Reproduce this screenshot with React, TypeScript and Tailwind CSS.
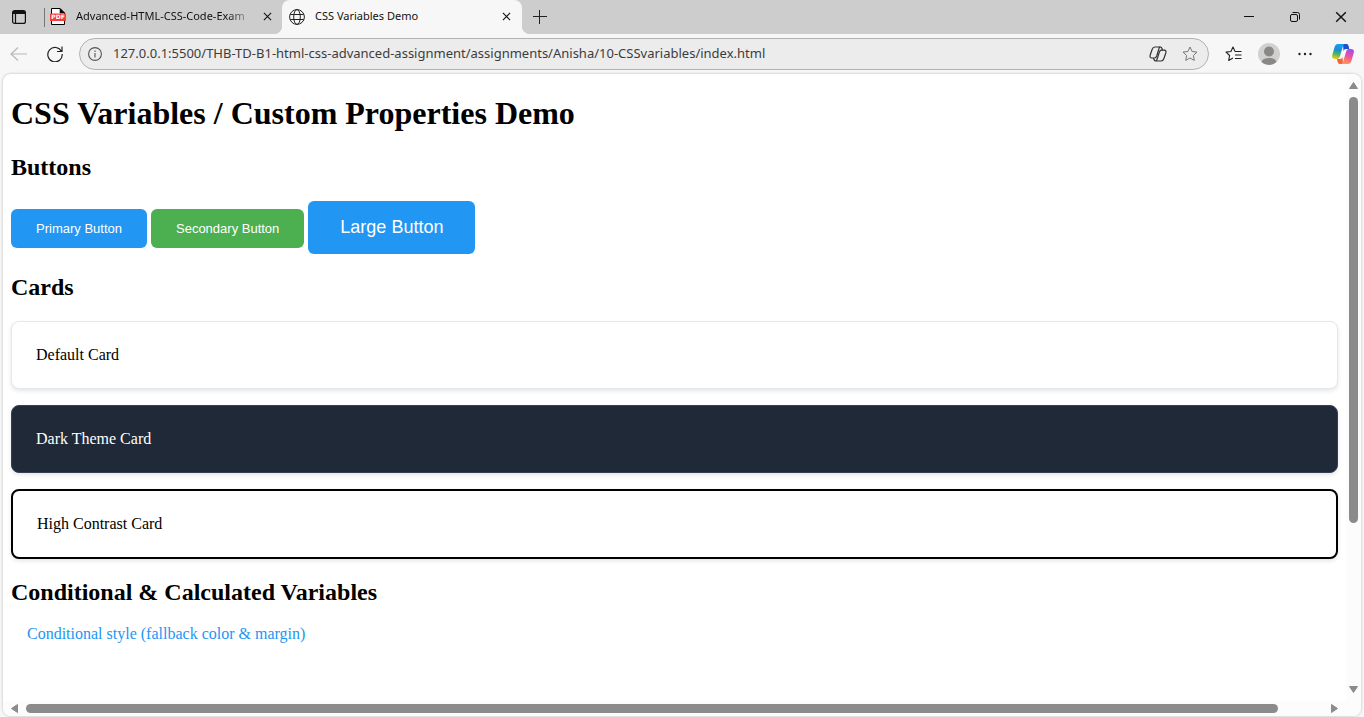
import React from "react";

const uiFont = "font-['Noto_Sans','Open_Sans',sans-serif]";

function CloseIcon({ className }: { className: string }) {
  return (
    <svg viewBox="0 0 10 10" className={className} fill="none" stroke="#111" strokeWidth="1.2">
      <path d="M1 1l8 8M9 1L1 9" />
    </svg>
  );
}

function PdfIcon() {
  return (
    <svg viewBox="0 0 16 17" className="h-[17px] w-4 shrink-0" fill="none">
      <path d="M1.500 16.500V.500H10L14.500 5v11.500z" fill="#fff" stroke="#000" />
      <path d="M10 .500V5h4.500z" fill="#000" stroke="#000" strokeWidth="0.600" />
      <rect x="0" y="5.500" width="16" height="7.500" fill="#f93b3f" />
      <text x="8" y="11.400" fontSize="6" fontWeight="700" fill="#fff" textAnchor="middle" fontFamily="DejaVu Sans, sans-serif">PDF</text>
    </svg>
  );
}

function GlobeIcon() {
  return (
    <svg viewBox="0 0 16 16" className="size-4 shrink-0" fill="none" stroke="#222" strokeWidth="1">
      <circle cx="8" cy="8" r="7.400" />
      <ellipse cx="8" cy="8" rx="3.300" ry="7.400" />
      <path d="M1.300 5.500h13.400M1.300 10.500h13.400" />
    </svg>
  );
}

function CopilotOutline() {
  return (
    <svg viewBox="0 0 18 16" className="h-4 w-[18px]" fill="none" stroke="#333" strokeWidth="1.200" strokeLinejoin="round">
      <path d="M5.800 1h5.400c1 0 1.500.5 1.800 1.500l.5 1.700M5.800 1C4.300 1 3.600 2 3.100 3.500L1.200 9c-.6 2 .1 3 1.600 3h2.700c1.300 0 1.800-.8 2.200-2l2-6.500C10.100 2 10.200 1 11.300 1" />
      <path d="M12.200 15H6.800c-1 0-1.500-.5-1.800-1.500l-.5-1.500M12.200 15c1.500 0 2.200-1 2.700-2.500L16.800 7c.6-2-.1-2.800-1.600-2.800h-2.700c-1.300 0-1.800.8-2.200 2l-2 6.300c-.4 1.500-.6 2.500-1.700 2.500" />
    </svg>
  );
}

function CopilotLogo() {
  return (
    <svg viewBox="0 0 22 20" className="h-5 w-[22px]">
      <defs>
        <linearGradient id="cool" x1="0.500" y1="0" x2="0.300" y2="1">
          <stop offset="0" stopColor="#159ff0" />
          <stop offset="0.400" stopColor="#1a8fd6" />
          <stop offset="0.700" stopColor="#5cb84a" />
          <stop offset="1" stopColor="#f3cb1c" />
        </linearGradient>
        <linearGradient id="warm" x1="0.700" y1="0" x2="0.400" y2="1">
          <stop offset="0" stopColor="#a04be8" />
          <stop offset="0.500" stopColor="#f0529c" />
          <stop offset="1" stopColor="#ff9a52" />
        </linearGradient>
      </defs>
      <path d="M11 0h3.500c1.200 0 1.700.7 2 1.800L17.300 5H14c-1.500 0-2 .8-2.500 2z" fill="#1d4fd0" />
      <path d="M11 20H8c-1.500 0-2-.8-2.300-2L4.900 15H8c1.500 0 2-.8 2.500-2z" fill="#f4633d" />
      <path d="M6 0h7c-1.300 0-1.700 1-2.100 2.200L8 12c-.7 2-1.300 3-3 3H3c-2.500 0-3.400-1.500-2.700-4L2.600 3C3.200 1 4.300 0 6 0z" fill="url(#cool)" />
      <path d="M16 20H9c1.300 0 1.700-1 2.100-2.200L14 8c.7-2 1.300-3 3-3h2c2.500 0 3.400 1.500 2.700 4l-2.300 8c-.6 2-1.700 3-3.400 3z" fill="url(#warm)" />
    </svg>
  );
}

const starPath = "M8 1l2.100 4.500 4.900.6-3.600 3.400.9 4.900L8 12l-4.300 2.400.9-4.900L1 6.100l4.900-.6z";

function TabStrip() {
  return (
    <div className="flex h-[34px] shrink-0 bg-[#cdcdcd] pb-px">
      <button aria-label="Tab actions" className="flex w-11 shrink-0 items-center pl-3">
        <svg viewBox="0 0 14 14" className="size-3.5" fill="none" stroke="#111" strokeWidth="1.200">
          <rect x="0.600" y="0.600" width="12.800" height="12.800" rx="2" />
          <path d="M1 2.500h12" strokeWidth="3" />
          <path d="M3.500 4v9" />
        </svg>
      </button>
      <div className="mt-2 mb-1.5 w-px shrink-0 bg-[#777]" />
      <div className="flex w-[237px] shrink-0 items-center pr-2.5 pl-[5px]">
        <PdfIcon />
        <a href="#pdf" className="ml-2.5 w-[180px] whitespace-nowrap text-[11px] text-[#111] [mask-image:linear-gradient(to_right,black_152px,transparent_178px)]">
          Advanced-HTML-CSS-Code-Exam
        </a>
        <button aria-label="Close tab" className="ml-auto shrink-0">
          <CloseIcon className="size-[9px]" />
        </button>
      </div>
      <div className="relative -mb-px flex w-60 shrink-0 items-center rounded-t-lg bg-[#f7f7f7] pr-[11px] pb-px pl-[7px]">
        <span className="absolute bottom-0 -left-2 size-2 bg-[radial-gradient(circle_at_0_0,transparent_8px,#f7f7f7_8px)]" />
        <span className="absolute -right-2 bottom-0 size-2 bg-[radial-gradient(circle_at_100%_0,transparent_8px,#f7f7f7_8px)]" />
        <GlobeIcon />
        <a href="#demo" className="ml-2.5 flex-1 text-[11px] text-[#111]">CSS Variables Demo</a>
        <button aria-label="Close tab">
          <CloseIcon className="size-[9px]" />
        </button>
      </div>
      <button aria-label="New tab" className="flex w-9 items-center justify-center">
        <svg viewBox="0 0 14 14" className="size-3.5" stroke="#222">
          <path d="M0 6.500h14M6.500 0v14" />
        </svg>
      </button>
      <div className="ml-auto flex">
        <button aria-label="Minimize" className="flex w-[46px] items-center justify-center">
          <svg viewBox="0 0 10 10" className="size-2.5" stroke="#111"><path d="M0 4.500h10" /></svg>
        </button>
        <button aria-label="Restore" className="flex w-[46px] items-center justify-center">
          <svg viewBox="0 0 10 10" className="size-2.5" fill="none" stroke="#111">
            <rect x="0.500" y="2.500" width="7" height="7" rx="1.500" />
            <path d="M2.500.500H7.500a2 2 0 0 1 2 2V7.500" />
          </svg>
        </button>
        <button aria-label="Close" className="flex w-[46px] items-center justify-center">
          <CloseIcon className="size-3" />
        </button>
      </div>
    </div>
  );
}

function Toolbar() {
  return (
    <div className="flex h-10 shrink-0 items-center pr-2.5">
      <button aria-label="Back" className="ml-2.5">
        <svg viewBox="0 0 17 14" className="h-3.5 w-[17px]" fill="none" stroke="#b8b8b8" strokeWidth="1.200">
          <path d="M17 7H1M8 .500L1 7l7 6.500" />
        </svg>
      </button>
      <button aria-label="Refresh" className="ml-5">
        <svg viewBox="0 0 16 16" className="size-4" fill="none" stroke="#222" strokeWidth="1.200">
          <path d="M14.500 5.500A7.200 7.200 0 1 0 15.200 8M15 .500v5h-5" />
        </svg>
      </button>
      <div className="ml-4 flex h-8 flex-1 items-center rounded-full border border-[#b2b2b2] bg-[#ececec] pr-2.5 pl-2">
        <svg viewBox="0 0 14 14" className="size-3.5 shrink-0" fill="none" stroke="#555" strokeWidth="1.100">
          <circle cx="7" cy="7" r="6.400" />
          <path d="M7 6v4.500M7 3.500V5" />
        </svg>
        <input
          aria-label="Address"
          className="ml-[11px] min-w-0 flex-1 bg-transparent text-[13px] text-[#3c3c3c] outline-none"
          defaultValue="127.0.0.1:5500/THB-TD-B1-html-css-advanced-assignment/assignments/Anisha/10-CSSvariables/index.html"
        />
        <button aria-label="Copilot in page"><CopilotOutline /></button>
        <button aria-label="Add to favorites" className="ml-[15px]">
          <svg viewBox="0 0 16 16" className="size-4" fill="none" stroke="#777" strokeLinejoin="round"><path d={starPath} /></svg>
        </button>
      </div>
      <button aria-label="Favorites" className="ml-4">
        <svg viewBox="0 0 17 16" className="h-4 w-[17px]" fill="none" stroke="#222" strokeWidth="1.100" strokeLinejoin="round">
          <path d="M10 5.500L8 1 5.900 5.500 1 6.100l3.600 3.400-.9 4.900L8 12M10 9h6.500M10 12.500h6.500M10 5.500h6.500" />
        </svg>
      </button>
      <button aria-label="Profile" className="ml-4">
        <svg viewBox="0 0 22 22" className="size-[22px]">
          <circle cx="11" cy="11" r="11" fill="#d2d0ce" />
          <circle cx="11" cy="8.500" r="5" fill="#8a8886" />
          <path d="M3.500 19c1-3 3.500-4 7.500-4s6.500 1 7.500 4A11 11 0 0 1 3.500 19z" fill="#8a8886" />
        </svg>
      </button>
      <button aria-label="Settings and more" className="ml-[18px]">
        <svg viewBox="0 0 14 4" className="h-1 w-3.5" fill="#222">
          <circle cx="1.500" cy="2" r="1.200" /><circle cx="7" cy="2" r="1.200" /><circle cx="12.500" cy="2" r="1.200" />
        </svg>
      </button>
      <button aria-label="Copilot" className="ml-5"><CopilotLogo /></button>
    </div>
  );
}

function Arrow({ d, label }: { d: string; label: string }) {
  return (
    <button aria-label={label} className="shrink-0">
      <svg viewBox="0 0 9 9" className="size-[9px]" fill="#8b8b8b" stroke="#8b8b8b" strokeLinejoin="round"><path d={d} /></svg>
    </button>
  );
}

const h2 = "text-2xl leading-[27px] font-bold";
const card = "rounded-lg p-6 text-base leading-[18px] shadow-[0_2px_4px_rgba(0,0,0,0.1)]";
const button = "rounded-md px-[25px] py-3 text-[13px] leading-[15px] font-medium";

function Demo() {
  return (
    <main className="min-w-0 flex-1 overflow-hidden px-2 pt-[21px] font-['Liberation_Serif',serif] text-black">
      <h1 className="text-[32px] leading-[37px] font-bold">CSS Variables / Custom Properties Demo</h1>
      <h2 className={`mt-[22px] ${h2}`}>Buttons</h2>
      <div className="mt-5 flex items-baseline gap-1 font-['Liberation_Sans',sans-serif] text-white">
        <button className={`${button} bg-[#2196f3]`}>Primary Button</button>
        <button className={`${button} bg-[#4caf50]`}>Secondary Button</button>
        <button className="rounded-md bg-[#2196f3] px-8 py-4 text-lg leading-[21px] font-medium">Large Button</button>
      </div>
      <h2 className={`mt-5 ${h2}`}>Cards</h2>
      <div className="mt-5 flex flex-col gap-4">
        <div className={`${card} border border-[#e2e8f0] bg-white`}>Default Card</div>
        <div className={`${card} border border-[#334155] bg-[#1f2937] text-white`}>Dark Theme Card</div>
        <div className={`${card} border-2 border-black bg-white`}>High Contrast Card</div>
      </div>
      <h2 className={`mt-5 ${h2}`}>Conditional &amp; Calculated Variables</h2>
      <p className="mx-4 mt-[19px] text-base leading-[18px] text-[#2196f3]">Conditional style (fallback color &amp; margin)</p>
    </main>
  );
}

export default function App() {
  return (
    <div className={`flex h-screen min-h-[600px] flex-col bg-[#f7f7f7] ${uiFont}`}>
      <TabStrip />
      <Toolbar />
      <div className="mx-[3px] mb-px flex min-h-0 flex-1 flex-col overflow-hidden rounded-lg bg-white shadow-[0_0_3px_rgba(0,0,0,0.25)]">
        <div className="flex min-h-0 flex-1">
          <Demo />
          <div className="flex w-[15px] shrink-0 flex-col items-center bg-[#fcfcfc] py-[7px]">
            <Arrow label="Scroll up" d="M4.500 1.500L8.500 7.500H.500z" />
            <div className="mt-[7px] mb-1 flex flex-1 flex-col">
              <div className="h-[73%] w-[9px] rounded-full bg-[#8b8b8b]" />
            </div>
            <Arrow label="Scroll down" d="M4.500 7.500L8.500 1.500H.500z" />
          </div>
        </div>
        <div className="flex h-[15px] shrink-0 items-center bg-[#fcfcfc] pr-[22px] pl-[7px]">
          <Arrow label="Scroll left" d="M1.500 4.500L7.500.500v8z" />
          <div className="mr-1 ml-[7px] flex-1 pr-12">
            <div className="h-[9px] rounded-full bg-[#8b8b8b]" />
          </div>
          <Arrow label="Scroll right" d="M7.500 4.500L1.500.500v8z" />
        </div>
      </div>
    </div>
  );
}
